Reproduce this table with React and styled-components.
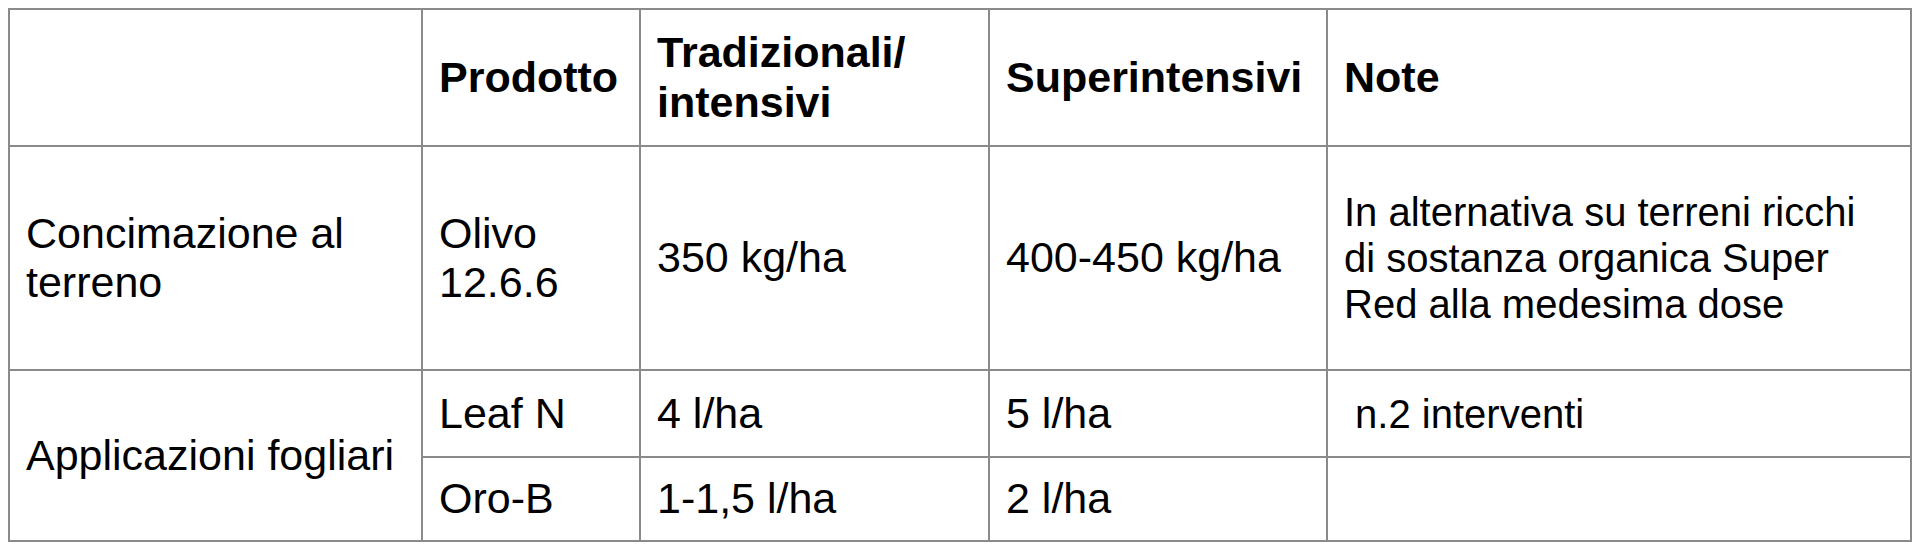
import React from "react";
import styled, { createGlobalStyle } from "styled-components";

const GlobalStyle = createGlobalStyle`
  html, body { background: #ffffff; }
  body {
    margin: 8px;
    font-family: "Liberation Sans", Arial, Helvetica, sans-serif;
    color: #000000;
  }
`;

const Table = styled.table`
  width: 100%;
  border-collapse: collapse;
  table-layout: fixed;
  line-height: 1.15;
`;

const Row = styled.tr`
  height: ${(p) => p.$h}px;
`;

const Cell = styled.td`
  border: 2px solid #8a8a8a;
  padding: 0 ${(p) => p.$pr ?? 16}px 0 16px;
  vertical-align: middle;
  font-size: ${(p) => (p.$small ? 40 : 43)}px;
  font-weight: 400;
  white-space: ${(p) => (p.$pre ? "pre" : "normal")};
`;

const HeadCell = styled.th`
  border: 2px solid #8a8a8a;
  padding: 0 16px;
  vertical-align: middle;
  text-align: left;
  font-size: 43px;
  font-weight: 700;
`;

const cols = [413, 218, 349, 338];

export default function App() {
  return (
    <>
      <GlobalStyle />
      <Table>
        <colgroup>
          {cols.map((w, i) => (
            <col key={i} style={{ width: w }} />
          ))}
          <col />
        </colgroup>
        <thead>
          <Row $h={137}>
            <HeadCell />
            <HeadCell>Prodotto</HeadCell>
            <HeadCell>Tradizionali/ intensivi</HeadCell>
            <HeadCell>Superintensivi</HeadCell>
            <HeadCell>Note</HeadCell>
          </Row>
        </thead>
        <tbody>
          <Row $h={224}>
            <Cell>Concimazione al terreno</Cell>
            <Cell>Olivo 12.6.6</Cell>
            <Cell>350 kg/ha</Cell>
            <Cell>400-450 kg/ha</Cell>
            <Cell $small $pr={40}>
              In alternativa su terreni ricchi di sostanza organica Super Red alla medesima dose
            </Cell>
          </Row>
          <Row $h={87}>
            <Cell rowSpan={2}>Applicazioni fogliari</Cell>
            <Cell>Leaf N</Cell>
            <Cell>4 l/ha</Cell>
            <Cell>5 l/ha</Cell>
            <Cell $small $pre>{" n.2 interventi"}</Cell>
          </Row>
          <Row $h={84}>
            <Cell>Oro-B</Cell>
            <Cell>1-1,5 l/ha</Cell>
            <Cell>2 l/ha</Cell>
            <Cell $small />
          </Row>
        </tbody>
      </Table>
    </>
  );
}
